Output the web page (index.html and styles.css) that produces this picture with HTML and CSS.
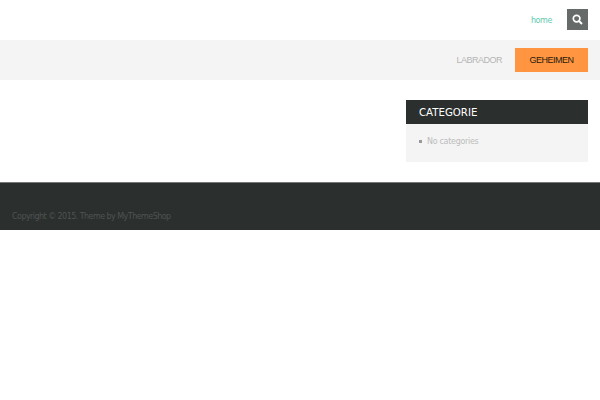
FILE: index.html
```html
<!DOCTYPE html>
<html lang="en">
<head>
    <meta charset="UTF-8">
    <meta name="viewport" content="width=device-width, initial-scale=1.0">
    <title>Labrador</title>
    <link rel="stylesheet" href="styles.css">
</head>
<body>
    <header class="top-bar">
        <a class="top-link" href="#">home</a>
        <button class="search-btn" aria-label="Search">
            <svg width="11" height="11" viewBox="0 0 11 11" fill="none" stroke="#fff">
                <circle cx="4.6" cy="4.6" r="3.3" stroke-width="1.7"/>
                <path d="M7 7l3 3" stroke-width="2"/>
            </svg>
        </button>
    </header>
    <nav class="main-nav">
        <a class="nav-link" href="#">LABRADOR</a>
        <a class="nav-link active" href="#">GEHEIMEN</a>
    </nav>
    <main class="content">
        <aside class="sidebar">
            <h3 class="widget-title">CATEGORIE</h3>
            <ul class="widget-list">
                <li>No categories</li>
            </ul>
        </aside>
    </main>
    <footer class="footer">
        <p>Copyright © 2015. Theme by MyThemeShop</p>
    </footer>
</body>
</html>
```

FILE: styles.css
```css
body {
    margin: 0;
    font-family: "DejaVu Sans", sans-serif;
    background: #fff;
}
a {
    text-decoration: none;
}
.top-bar {
    height: 40px;
    display: flex;
    justify-content: flex-end;
    align-items: flex-start;
    padding-top: 9px;
    padding-right: 12px;
    box-sizing: border-box;
}
.top-link {
    color: #5ec9ad;
    font-size: 8px;
    letter-spacing: -0.4px;
    line-height: 23px;
    margin-right: 15px;
}
.search-btn {
    width: 21px;
    height: 21px;
    padding: 0;
    border: none;
    background: #666b6a;
    display: flex;
    align-items: center;
    justify-content: center;
}
.main-nav {
    height: 40px;
    background: #f4f4f4;
    display: flex;
    justify-content: flex-end;
    align-items: center;
    padding-right: 12px;
}
.nav-link {
    font-family: "Liberation Sans", sans-serif;
    font-size: 9px;
    letter-spacing: -0.5px;
    color: #b5b5b5;
    margin-right: 13px;
}
.nav-link.active {
    width: 73px;
    height: 24px;
    line-height: 24px;
    margin-right: 0;
    text-align: center;
    background: #ff9540;
    color: #2a1a0c;
}
.content {
    display: flex;
    justify-content: flex-end;
    padding: 20px 12px 20px 0;
}
.sidebar {
    width: 182px;
    background: #f4f4f4;
}
.widget-title {
    margin: 0;
    height: 24px;
    line-height: 25px;
    padding-left: 13px;
    background: #2b2f2e;
    color: #fff;
    font-size: 10.2px;
    font-weight: normal;
}
.widget-list {
    margin: 0;
    padding: 12px 13px 15px;
    list-style: none;
    color: #bcbcbc;
    font-size: 8px;
    letter-spacing: -0.3px;
    line-height: 11px;
}
.widget-list li::before {
    content: "";
    display: inline-block;
    width: 3px;
    height: 3px;
    margin-right: 5px;
    vertical-align: 1px;
    background: #999;
}
.footer {
    height: 48px;
    box-sizing: border-box;
    background: #2b2f2e;
    border-top: 1px solid #777;
    padding: 29px 12px 0;
}
.footer p {
    margin: 0;
    color: #4f5352;
    font-size: 8px;
    letter-spacing: -0.55px;
    line-height: 10px;
}
```
